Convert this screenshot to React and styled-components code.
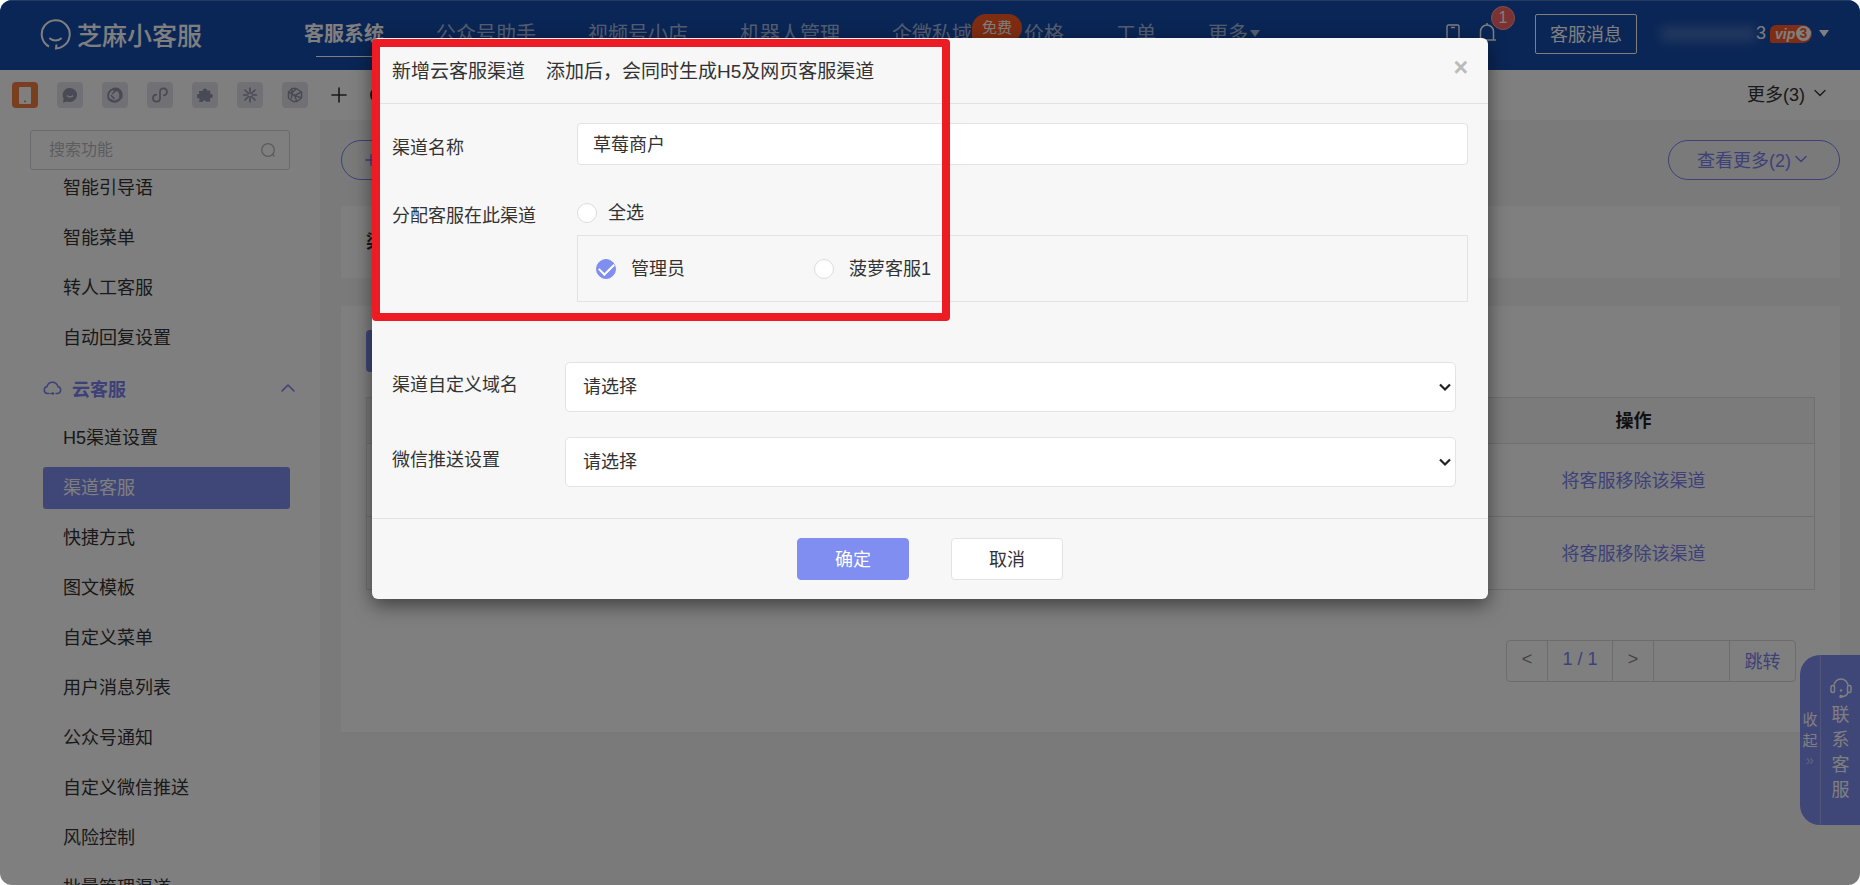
import React from "react";
import styled, { createGlobalStyle } from "styled-components";
import { ChevronDown, ChevronUp, Plus } from "lucide-react";

const PRIMARY = "#7f8ef0";
const ACCENT = "#7b82f0";

const Global = createGlobalStyle`
  * { box-sizing: border-box; }
  body { margin: 0; background: #fff; }
  body, button, input, select {
    font-family: "Liberation Sans", "Noto Sans CJK SC", sans-serif;
    font-size: 18px;
    color: #333;
  }
  button { background: none; border: 0; padding: 0; cursor: pointer; }
  a { text-decoration: none; color: inherit; }
  ul { list-style: none; margin: 0; padding: 0; }
`;

const Page = styled.div`
  position: relative;
  display: flex;
  flex-direction: column;
  height: 100vh;
  overflow: hidden;
  border-radius: 12px;
  background: #fff;
`;

const TopBar = styled.header`
  display: flex;
  flex: none;
  align-items: center;
  height: 70px;
  padding: 0 31px 4px 40px;
  background: #144cac;
  border-top: 1px solid #4a78c4;
  color: #fff;
`;

const Brand = styled.a`
  display: flex;
  align-items: center;
  gap: 6px;
  width: 264px;
  font-size: 25px;
  font-weight: 500;
`;

const Nav = styled.nav`
  display: flex;
  gap: 52px;
`;

const NavLink = styled.a`
  position: relative;
  display: flex;
  align-items: center;
  gap: 2px;
  line-height: 44px;
  font-size: 20px;
  white-space: nowrap;
  font-weight: ${(p) => (p.$active ? 700 : 400)};
  color: ${(p) => (p.$active ? "#fff" : "rgba(255,255,255,0.65)")};
  &::after {
    content: "";
    display: ${(p) => (p.$active ? "block" : "none")};
    position: absolute;
    left: 12px;
    right: 12px;
    bottom: -1px;
    height: 1px;
    background: #fff;
  }
`;

const FreeTag = styled.span`
  position: absolute;
  left: 100%;
  top: 2px;
  width: 50px;
  border-radius: 14px 14px 14px 0;
  background: #ff5a22;
  color: #fff;
  font-size: 15px;
  line-height: 28px;
  text-align: center;
`;

const Account = styled.div`
  display: flex;
  align-items: center;
  margin-left: auto;
`;

const BellButton = styled.button`
  position: relative;
  display: flex;
  margin: 0 38px 0 17px;
`;

const Count = styled.span`
  position: absolute;
  left: 14px;
  top: -17px;
  width: 24px;
  border-radius: 12px;
  background: #f56464;
  border: 1px solid #f9a0a0;
  color: #fff;
  font-size: 16px;
  line-height: 22px;
`;

const MessageButton = styled.button`
  width: 102px;
  height: 40px;
  padding-bottom: 2px;
  border: 1px solid #fff;
  border-radius: 2px;
  color: #fff;
`;

const UserName = styled.span`
  display: flex;
  align-items: center;
  justify-content: flex-end;
  width: 105px;
  margin: 0 4px 0 24px;
  &::before {
    content: "";
    flex: 1;
    height: 14px;
    background: #6e90cc;
    opacity: 0.6;
    filter: blur(6px);
  }
`;

const Vip = styled.span`
  display: flex;
  align-items: center;
  justify-content: space-between;
  width: 42px;
  height: 18px;
  margin-right: 7px;
  padding: 0 1px 0 5px;
  border-radius: 6px 9px 9px 2px;
  background: #ff5a2a;
  font-size: 14px;
  font-style: italic;
  font-weight: 700;
  b {
    width: 15px;
    border-radius: 8px;
    background: #fff;
    color: #ff5a2a;
    font-size: 14px;
    font-style: normal;
    line-height: 15px;
    text-align: center;
  }
`;

const Toolbar = styled.div`
  display: flex;
  flex: none;
  align-items: center;
  gap: 19px;
  height: 50px;
  padding: 0 30px 0 12px;
`;

const AppButton = styled.button`
  display: grid;
  place-items: center;
  width: 26px;
  height: 26px;
  border-radius: 4px;
  background: ${(p) => (p.$active ? "#f47c42" : "#e2e3ea")};
  color: ${(p) => (p.$active ? "#fff" : "#9095aa")};
`;

const PlainButton = styled.button`
  display: flex;
  align-items: center;
  gap: 5px;
  margin-left: ${(p) => (p.$end ? "auto" : "0")};
  padding-bottom: ${(p) => (p.$end ? 4 : 0)}px;
`;

const Columns = styled.div`
  display: flex;
  flex: 1;
  min-height: 0;
`;

const Sidebar = styled.aside`
  display: flex;
  flex: none;
  flex-direction: column;
  width: 320px;
  padding-top: 10px;
`;

const SearchBox = styled.label`
  display: flex;
  flex: none;
  align-items: center;
  height: 40px;
  margin: 0 30px;
  padding: 0 13px 0 18px;
  border: 1px solid #d2d4dc;
  border-radius: 3px;
  color: #b4b6be;
  input {
    flex: 1;
    min-width: 0;
    border: 0;
    outline: 0;
    padding: 0;
    background: none;
    font-size: 16px;
  }
  input::placeholder { color: #b8bac2; }
`;

const MenuScroll = styled.nav`
  flex: 1;
  overflow: hidden;
  ul { margin: -7px 30px 0 43px; }
  li {
    display: flex;
    flex-direction: column;
    justify-content: center;
    height: 50px;
  }
`;

const MenuItem = styled.a`
  padding-left: 20px;
  border-radius: 3px;
  line-height: 42px;
  background: ${(p) => (p.$active ? PRIMARY : "none")};
  color: ${(p) => (p.$active ? "#fff" : "#333")};
`;

const MenuGroup = styled.button`
  display: flex;
  align-items: center;
  height: 50px;
  color: ${ACCENT};
  font-weight: 700;
  span { margin: 0 auto 0 10px; }
  svg:last-child { margin-right: -10px; }
`;

const Main = styled.main`
  flex: 1;
  padding: 20px 20px 0 21px;
  background: #f5f5f7;
`;

const Actions = styled.div`
  display: flex;
  justify-content: space-between;
`;

const Pill = styled.button`
  display: flex;
  align-items: center;
  justify-content: ${(p) => (p.$start ? "flex-start" : "center")};
  width: 172px;
  height: 40px;
  padding: 0 20px ${(p) => (p.$start ? 0 : 3)}px;
  border: 1px solid ${ACCENT};
  border-radius: 20px;
  color: ${ACCENT};
`;

const Card = styled.section`
  margin-top: ${(p) => p.$gap}px;
  padding: 24px 25px;
  background: #fff;
`;

const CardTitle = styled.h2`
  margin: 0;
  font-size: 18px;
  line-height: 24px;
`;

const AddButton = styled.button`
  display: block;
  width: 120px;
  height: 42px;
  margin-bottom: 25px;
  border-radius: 4px;
  background: ${PRIMARY};
`;

const Table = styled.table`
  width: 100%;
  table-layout: fixed;
  border-collapse: collapse;
  th, td {
    border: 1px solid #e0e0e0;
    text-align: center;
    padding: 0 0 3px;
  }
  th { height: 46px; background: #f7f7f7; color: #222; }
  td { height: 73px; color: ${ACCENT}; }
`;

const Pager = styled.div`
  display: flex;
  width: 290px;
  height: 42px;
  margin: 50px 19px 26px auto;
  border: 1px solid #d8d8d8;
  border-radius: 4px;
  > * { border: 0; border-right: 1px solid #d8d8d8; }
  > :last-child { border-right: 0; }
`;

const PagerButton = styled.button`
  width: ${(p) => p.$width}px;
  padding-bottom: 3px;
  color: ${(p) => (p.$muted ? "#888" : ACCENT)};
`;

const PagerInput = styled.input`
  width: 76px;
  background: none;
  outline: 0;
`;

const Contact = styled.aside`
  position: absolute;
  right: 0;
  top: 655px;
  display: flex;
  width: 60px;
  height: 170px;
  border-radius: 20px 0 0 20px;
  background: ${PRIMARY};
  button {
    display: flex;
    flex-direction: column;
    align-items: center;
    color: #fff;
  }
`;

const Collapse = styled.button`
  width: 21px;
  padding-top: 54px;
  border-right: 1px solid #a4aef5;
  font-size: 15px;
  line-height: 21px;
  small { font-size: 15px; line-height: 18px; opacity: 0.5; }
`;

const ContactButton = styled.button`
  flex: 1;
  padding-top: 23px;
  line-height: 25px;
  svg { flex: none; margin-bottom: 5px; }
`;

const Overlay = styled.div`
  position: absolute;
  inset: 0;
  padding-top: 38px;
  background: rgba(0, 0, 0, 0.5);
`;

const Dialog = styled.form`
  position: relative;
  width: 60%;
  margin: 0 auto;
  border-radius: 6px;
  background: #f7f7f7;
  box-shadow: 0 6px 19px rgba(0, 0, 0, 0.5);
`;

const DialogHeader = styled.header`
  display: flex;
  align-items: center;
  gap: 21px;
  height: 66px;
  padding: 0 20px 3px;
  border-bottom: 1px solid #e2e2e2;
  font-size: 19px;
`;

const Close = styled.button`
  margin: 0 0 4px auto;
  color: #bbb;
  font-size: 25px;
  font-weight: 700;
  line-height: 25px;
`;

const DialogBody = styled.div`
  padding: 19px 20px 31px;
`;

const Row = styled.div`
  display: grid;
  grid-template-columns: ${(p) => (p.$select ? "173px 1fr" : "185px 1fr")};
  margin-top: ${(p) => p.$gap || 0}px;
  padding-right: ${(p) => (p.$select ? 12 : 0)}px;
`;

const RowLabel = styled.label`
  padding-top: ${(p) => p.$top || 0}px;
  line-height: 30px;
`;

const TextInput = styled.input`
  width: 100%;
  height: 42px;
  padding: 0 15px 2px;
  border: 1px solid #e3e3e3;
  border-radius: 4px;
  background: #fff;
`;

const SelectWrap = styled.div`
  position: relative;
  select {
    display: block;
    width: 100%;
    height: 50px;
    padding: 0 17px;
    border: 1px solid #e3e3e3;
    border-radius: 5px;
    background: #fff;
    appearance: none;
  }
  svg {
    position: absolute;
    right: 5px;
    top: 19px;
    pointer-events: none;
  }
`;

const Check = styled.label`
  display: flex;
  align-items: center;
  gap: ${(p) => p.$gap || 15}px;
  width: 218px;
  line-height: 24px;
  input {
    appearance: none;
    flex: none;
    width: 20px;
    height: 20px;
    margin: 0;
    border: 1px solid #ddd;
    border-radius: 50%;
    background: #fff;
  }
  input:checked {
    display: grid;
    place-items: center;
    border-color: ${PRIMARY};
    background: ${PRIMARY};
  }
  input:checked::after {
    content: "";
    width: 13px;
    height: 7px;
    margin-bottom: 2px;
    border: solid #fff;
    border-width: 0 0 2px 2px;
    transform: rotate(-45deg);
  }
`;

const CheckPanel = styled.div`
  display: flex;
  align-items: center;
  height: 67px;
  margin-top: 10px;
  padding-left: 18px;
  border: 1px solid #e3e3e3;
`;

const DialogFooter = styled.footer`
  display: flex;
  justify-content: center;
  gap: 42px;
  padding: 19px 0;
  border-top: 1px solid #e2e2e2;
`;

const DialogButton = styled.button`
  width: 112px;
  height: 42px;
  padding-bottom: 3px;
  border: 1px solid ${(p) => (p.$primary ? PRIMARY : "#e3e3e3")};
  border-radius: 4px;
  background: ${(p) => (p.$primary ? PRIMARY : "#fff")};
  color: ${(p) => (p.$primary ? "#fff" : "#333")};
`;

const Highlight = styled.div`
  position: absolute;
  left: 0;
  top: 1px;
  width: 578px;
  height: 282px;
  border: 8px solid #ed1c24;
  border-radius: 4px;
  pointer-events: none;
`;

const Smile = () => (
  <svg width="31" height="32" viewBox="0 0 31 32" fill="none" stroke="currentColor" strokeWidth="2">
    <path d="M9 28.5A14 14 0 1 1 23 28.2C20.5 30 18 30.5 16 30.5L16.5 26.5" />
    <path d="M10 20.5c3 2.6 8 2.6 11 0" strokeLinecap="round" />
  </svg>
);

const Caret = () => (
  <svg width="10" height="7" viewBox="0 0 10 7" fill="currentColor"><path d="M0 0h10L5 7z" /></svg>
);

const icons = [
  <svg width="12" height="17" viewBox="0 0 12 17"><rect width="12" height="17" rx="1" fill="#fff" /><circle cx="6" cy="14.5" r="1" fill="#f47c42" /></svg>,
  <svg width="16" height="16" viewBox="0 0 16 16"><path d="M8 1a7 7 0 1 1-2.8 13.4L1 15.5l.6-4A7 7 0 0 1 8 1z" fill="currentColor" /><path d="M5 8.5c1.800 2 4.300 2 6 0" fill="none" stroke="#e2e3ea" strokeWidth="1.4" /></svg>,
  <svg width="18" height="18" viewBox="0 0 18 18" fill="none" stroke="currentColor" strokeLinecap="round"><path d="M2.500 12.500C.8 8.500 3.500 3.800 8 2.600" strokeWidth="2" /><path d="M8.500 3.500c4-1 7.300 2.500 6.300 7.500" strokeWidth="3.400" /><path d="M3.500 13.500c3.500 3.200 8 2.700 11-1.200" strokeWidth="2.400" /><path d="M6.500 7.500L9.500 5M5.200 9.500l3 3" strokeWidth="1.500" /></svg>,
  <svg width="18" height="18" viewBox="0 0 18 18" fill="none" stroke="currentColor" strokeWidth="1.700" strokeLinecap="round"><path d="M5.300 8.700A3.500 3.500 0 1 0 9 12.600V5.400a3.500 3.500 0 1 1 3.700 3.900" /></svg>,
  <svg width="16" height="16" viewBox="0 0 16 16" fill="currentColor"><path d="M5.600 4a2.300 2.300 0 1 1 4.600-.4l3.200.2-.3 3a2.200 2.200 0 1 1-.2 4.200l.5 3.500-4.200.3a2 2 0 0 0-3.700.1l-3.400.1.6-3.800a2.200 2.200 0 1 1-.4-4.100L1.800 4z" /></svg>,
  <svg width="18" height="18" viewBox="0 0 18 18" fill="none" stroke="currentColor" strokeWidth="1.600" strokeLinecap="round"><path d="M9 2v5M9 11v5M2.500 9h4M11.500 9h4M4 4l3.500 3.500M10.500 10.500L14 14M14 4l-3.500 3.500M7.500 10.500L4 14" /></svg>,
  <svg width="18" height="18" viewBox="0 0 18 18" fill="none" stroke="currentColor" strokeWidth="1.500" strokeLinejoin="round"><path d="M6 2.500h4.500L15.500 6v6L11 15.500H7L2.500 12V6z" /><path d="M2.500 6l6 3.500 7-3.500M8.500 9.500L11 15.500M6 2.500l-.5 10M10.500 2.500L5.800 7M15.500 12L9 9.500" /></svg>,
];

const appNames = ["手机", "会话", "浏览器", "小程序", "插件", "聚合", "更多渠道"];
const navItems = ["公众号助手", "视频号小店", "机器人管理"];
const topMenu = ["智能引导语", "智能菜单", "转人工客服", "自动回复设置"];
const cloudMenu = ["H5渠道设置", "渠道客服", "快捷方式", "图文模板", "自定义菜单", "用户消息列表", "公众号通知", "自定义微信推送", "风险控制", "批量管理渠道"];

function SelectRow({ id, label, gap }) {
  return (
    <Row $select $gap={gap}>
      <RowLabel htmlFor={id} $top={8}>{label}</RowLabel>
      <SelectWrap>
        <select id={id}><option>请选择</option></select>
        <svg width="12" height="12" viewBox="0 0 12 12" fill="none" stroke="#222" strokeWidth="2.2"><path d="M1 3.500l5 5 5-5" /></svg>
      </SelectWrap>
    </Row>
  );
}

export default function App() {
  return (
    <Page>
      <Global />
      <TopBar>
        <Brand href="#"><Smile />芝麻小客服</Brand>
        <Nav>
          <NavLink href="#" $active>客服系统</NavLink>
          {navItems.map((t) => <NavLink href="#" key={t}>{t}</NavLink>)}
          <NavLink href="#">企微私域<FreeTag>免费</FreeTag></NavLink>
          <NavLink href="#">价格</NavLink>
          <NavLink href="#">工单</NavLink>
          <NavLink href="#">更多<Caret /></NavLink>
        </Nav>
        <Account>
          <svg width="14" height="20" viewBox="0 0 14 20" fill="none" stroke="currentColor" strokeWidth="1.400"><rect x="1" y="1" width="12" height="18" rx="1.500" /><path d="M5 3.500h4" /></svg>
          <BellButton aria-label="通知">
            <svg width="20" height="22" viewBox="0 0 20 22" fill="none" stroke="#fff" strokeWidth="1.500"><path d="M1 17h18M3.500 17V8.500a6.500 6.500 0 0 1 13 0V17M10 2.500V0" /></svg>
            <Count>1</Count>
          </BellButton>
          <MessageButton>客服消息</MessageButton>
          <UserName>3</UserName>
          <Vip>vip<b>3</b></Vip>
          <Caret />
        </Account>
      </TopBar>
      <Toolbar>
        {icons.map((icon, i) => (
          <AppButton key={appNames[i]} aria-label={appNames[i]} $active={i === 0}>{icon}</AppButton>
        ))}
        <PlainButton aria-label="添加"><Plus size={24} strokeWidth={1.6} /></PlainButton>
        <PlainButton aria-label="设置"><svg width="16" height="16" viewBox="0 0 16 16"><circle cx="8" cy="8" r="7" fill="none" stroke="#333" strokeWidth="2" /></svg></PlainButton>
        <PlainButton $end>更多(3)<ChevronDown size={20} strokeWidth={1.6} /></PlainButton>
      </Toolbar>
      <Columns>
        <Sidebar>
          <SearchBox>
            <input placeholder="搜索功能" aria-label="搜索功能" />
            <svg width="16" height="16" viewBox="0 0 16 16" fill="none" stroke="currentColor" strokeWidth="1.300"><circle cx="8" cy="8" r="6.300" /><path d="M12.300 12.300L14.500 14.500" /></svg>
          </SearchBox>
          <MenuScroll>
            <ul>
              {topMenu.map((t) => <li key={t}><MenuItem href="#">{t}</MenuItem></li>)}
              <li>
                <MenuGroup>
                  <svg width="19" height="15" viewBox="0 0 19 15" fill="none" stroke="currentColor" strokeWidth="1.500"><path d="M6 12.500H4.500a3.600 3.600 0 0 1-.4-7.100 5.500 5.500 0 0 1 10.700 0 3.600 3.600 0 0 1-.3 7.100H13M8 12.500h2" strokeLinecap="round" /><circle cx="10" cy="12.500" r="1.200" fill="currentColor" stroke="none" /></svg>
                  <span>云客服</span>
                  <ChevronUp size={24} strokeWidth={1.6} />
                </MenuGroup>
              </li>
              {cloudMenu.map((t) => <li key={t}><MenuItem href="#" $active={t === "渠道客服"}>{t}</MenuItem></li>)}
            </ul>
          </MenuScroll>
        </Sidebar>
        <Main>
          <Actions>
            <Pill $start aria-label="新增"><Plus size={18} strokeWidth={1.8} /></Pill>
            <Pill>查看更多(2)<ChevronDown size={20} strokeWidth={1.8} /></Pill>
          </Actions>
          <Card $gap={26}><CardTitle>渠</CardTitle></Card>
          <Card $gap={28}>
            <AddButton aria-label="新增渠道" />
            <Table>
              <thead><tr><th /><th /><th /><th>操作</th></tr></thead>
              <tbody>
                {[1, 2].map((n) => (
                  <tr key={n}><td /><td /><td /><td><a href="#">将客服移除该渠道</a></td></tr>
                ))}
              </tbody>
            </Table>
            <Pager>
              <PagerButton $width={41} $muted>&lt;</PagerButton>
              <PagerButton $width={65}>1 / 1</PagerButton>
              <PagerButton $width={41} $muted>&gt;</PagerButton>
              <PagerInput aria-label="页码" />
              <PagerButton $width={65}>跳转</PagerButton>
            </Pager>
          </Card>
        </Main>
      </Columns>
      <Contact>
        <Collapse><span>收</span><span>起</span><small>»</small></Collapse>
        <ContactButton>
          <svg width="22" height="20" viewBox="0 0 22 20" fill="none" stroke="currentColor" strokeWidth="1.500"><path d="M4 8a7 7 0 0 1 14 0M18 14c-.6 3-3 4.500-6 4.500" /><rect x="1" y="7.500" width="3.500" height="7" rx="1.500" /><rect x="17.500" y="7.500" width="3.500" height="7" rx="1.500" /><circle cx="11" cy="18.500" r="1" fill="currentColor" /><circle cx="11" cy="12.500" r=".5" /></svg>
          <span>联</span><span>系</span><span>客</span><span>服</span>
        </ContactButton>
      </Contact>
      <Overlay>
        <Dialog role="dialog" aria-label="新增云客服渠道">
          <DialogHeader>
            <span>新增云客服渠道</span>
            <span>添加后，会同时生成H5及网页客服渠道</span>
            <Close type="button" aria-label="关闭">×</Close>
          </DialogHeader>
          <DialogBody>
            <Row>
              <RowLabel htmlFor="name" $top={10}>渠道名称</RowLabel>
              <TextInput id="name" defaultValue="草莓商户" />
            </Row>
            <Row $gap={36}>
              <RowLabel as="span">分配客服在此渠道</RowLabel>
              <div>
                <Check $gap={11}><input type="checkbox" />全选</Check>
                <CheckPanel>
                  <Check><input type="checkbox" defaultChecked />管理员</Check>
                  <Check><input type="checkbox" />菠萝客服1</Check>
                </CheckPanel>
              </div>
            </Row>
            <SelectRow id="domain" label="渠道自定义域名" gap={60} />
            <SelectRow id="push" label="微信推送设置" gap={25} />
          </DialogBody>
          <DialogFooter>
            <DialogButton type="button" $primary>确定</DialogButton>
            <DialogButton type="button">取消</DialogButton>
          </DialogFooter>
          <Highlight />
        </Dialog>
      </Overlay>
    </Page>
  );
}
